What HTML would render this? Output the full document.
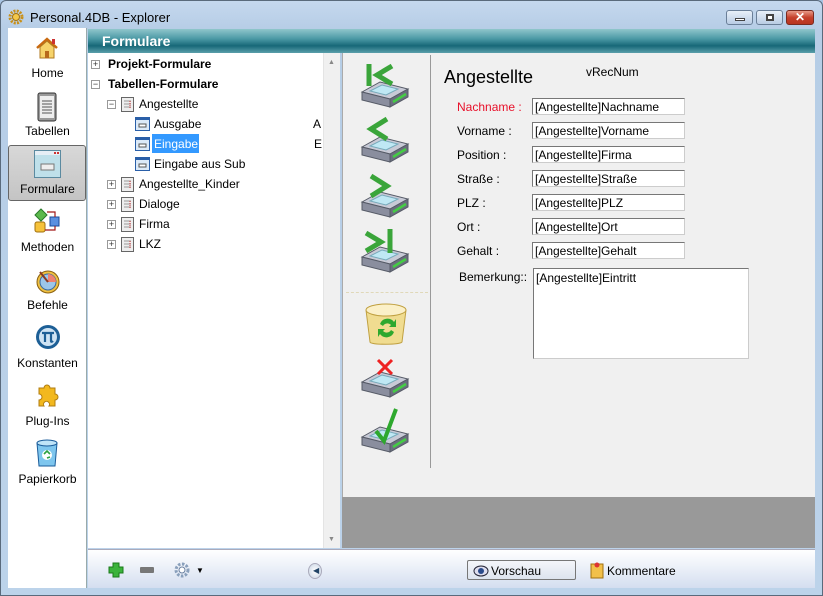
<!DOCTYPE html>
<html><head><meta charset="utf-8"><style>
*{margin:0;padding:0;box-sizing:border-box}
body{width:823px;height:596px;overflow:hidden;font-family:"Liberation Sans",sans-serif;font-size:12px;color:#000;background:#a9c5e4;position:relative}
.a{position:absolute}
.win{left:0;top:0;width:823px;height:596px;border:1px solid #5a6a7c;border-radius:6px 6px 0 0;background:linear-gradient(#c5d8ee,#b6cde6 28px,#bcd3ea)}
.side{left:8px;top:28px;width:79px;height:560px;background:#fff;border-right:1px solid #9aa}
.si{position:absolute;left:0;width:79px;text-align:center;font-size:12px;color:#000}
.hdr{left:88px;top:29px;width:727px;height:24px;background:linear-gradient(#8fc6cb,#4c9aa6 40%,#176878 70%,#5a9fab);color:#fff;font-weight:bold;font-size:14px;padding:4px 0 0 14px}
.tree{left:88px;top:53px;width:252px;height:495px;background:#fff}
.tr{position:absolute;font-size:12px;white-space:nowrap}
.pm{position:absolute;width:9px;height:9px;border:1px solid #999;background:#fff;font-size:9px;line-height:7px;text-align:center;color:#333}
.right{left:342px;top:53px;width:473px;height:444px;background:#f0f0f0;border-left:1px solid #aaa}
.gray{left:342px;top:497px;width:473px;height:51px;background:#999}
.lbl{position:absolute;left:457px;font-size:12px}
.inp{position:absolute;left:532px;width:153px;height:17px;background:#fff;border:1px solid #777;border-right-color:#ccc;border-bottom-color:#ccc;padding:1px 0 0 2px;font-size:12px;white-space:nowrap;overflow:hidden}
.bot{left:88px;top:549px;width:727px;height:39px;background:linear-gradient(#fff,#eef2f9 40%,#d4def0);border-top:1px solid #aab}
</style></head><body>
<div class="a win"></div>
<svg class="a" style="left:8px;top:9px" width="16" height="16" viewBox="0 0 16 16"><circle cx="8" cy="8" r="6" fill="none" stroke="#c8901a" stroke-width="3" stroke-dasharray="2 1.2"/><circle cx="8" cy="8" r="3.5" fill="#f3c84a" stroke="#a07010"/></svg>
<div class="a" style="left:30px;top:10px;font-size:13px">Personal.4DB - Explorer</div>
<div class="a" style="left:726px;top:10px;width:27px;height:15px;border:1px solid #6a7f98;border-radius:3px;background:linear-gradient(#e8f0f9,#b9cce4)"><div class="a" style="left:8px;top:7px;width:10px;height:3px;background:#fff;border:1px solid #444"></div></div>
<div class="a" style="left:756px;top:10px;width:27px;height:15px;border:1px solid #6a7f98;border-radius:3px;background:linear-gradient(#e8f0f9,#b9cce4)"><div class="a" style="left:9px;top:3px;width:8px;height:7px;border:2px solid #444;background:#fff"></div></div>
<div class="a" style="left:786px;top:10px;width:28px;height:15px;border:1px solid #7a2a20;border-radius:3px;background:linear-gradient(#e89a88,#c5402c 50%,#b83420);color:#fff;font-weight:bold;font-size:12px;text-align:center;line-height:13px">✕</div>

<div class="a side">
 <svg class="a" style="left:27px;top:8px" width="24" height="24" viewBox="0 0 24 24"><path d="M2 12L12 3l10 9" fill="none" stroke="#c96a10" stroke-width="2.5"/><path d="M5 11v11h14V11L12 5z" fill="#f6d36a" stroke="#b07820"/><rect x="10" y="15" width="4" height="7" fill="#b86a1a"/><rect x="17" y="3" width="3" height="5" fill="#c33"/></svg>
 <div class="si" style="top:38px">Home</div>
 <svg class="a" style="left:29px;top:64px" width="20" height="30" viewBox="0 0 20 30"><rect x="1" y="1" width="18" height="28" rx="2" fill="#9a9a9a" stroke="#333"/><rect x="3" y="4" width="14" height="22" fill="#eee"/><path d="M5 9h10M5 12h10M5 15h10M5 18h10M5 21h10" stroke="#555"/></svg>
 <div class="si" style="top:96px">Tabellen</div>
 <div class="a" style="left:0;top:117px;width:78px;height:56px;border:1px solid #666;border-radius:3px;background:linear-gradient(#d8d8d8,#c4c4c4)"></div>
 <svg class="a" style="left:26px;top:122px" width="27" height="28" viewBox="0 0 27 28"><rect x=".5" y=".5" width="26" height="27" fill="#bfe0ea" stroke="#5b8aa0"/><rect x="1" y="1" width="25" height="4" fill="#e6eef5"/><rect x="20" y="2" width="2" height="2" fill="#c33"/><rect x="23" y="2" width="2" height="2" fill="#c33"/><rect x="7" y="14" width="13" height="6" fill="#eee" stroke="#777"/></svg>
 <div class="si" style="top:154px">Formulare</div>
 <svg class="a" style="left:25px;top:180px" width="28" height="28" viewBox="0 0 28 28"><path d="M8 1l6 6-6 6-6-6z" fill="#5cb84c" stroke="#2a7a2a"/><rect x="2" y="14" width="10" height="10" rx="2" fill="#f6c23a" stroke="#a07010"/><rect x="17" y="9" width="9" height="9" fill="#5a8fe0" stroke="#1a4a9a"/><path d="M14 4h8v5M12 22h10v-4" fill="none" stroke="#a01818" stroke-width="1.2"/></svg>
 <div class="si" style="top:212px">Methoden</div>
 <svg class="a" style="left:27px;top:240px" width="26" height="26" viewBox="0 0 26 26"><circle cx="13" cy="14" r="11" fill="#f0c040" stroke="#8a6010"/><circle cx="13" cy="14" r="8" fill="#9cc6ea" stroke="#3a6aa0"/><path d="M13 14L13 6A8 8 0 0 1 21 14z" fill="#f08070"/><path d="M5 4l8 10" stroke="#8a3a20" stroke-width="2"/></svg>
 <div class="si" style="top:270px">Befehle</div>
 <svg class="a" style="left:27px;top:296px" width="26" height="26" viewBox="0 0 26 26"><circle cx="13" cy="13" r="12" fill="#1d5f96"/><circle cx="13" cy="13" r="9" fill="#cfe3f3"/><path d="M7 9h12M10 9v9M16 9v8c0 1 1 1 2 0" fill="none" stroke="#1d5f96" stroke-width="2.2"/></svg>
 <div class="si" style="top:328px">Konstanten</div>
 <svg class="a" style="left:28px;top:354px" width="24" height="26" viewBox="0 0 24 26"><path d="M3 6h5a3 3 0 1 1 6 0h5v6a3 3 0 1 1 0 6v6h-6a3 3 0 1 0-5 0H3v-6a3 3 0 1 0 0-6z" fill="#f2b81e" stroke="#b07c10"/></svg>
 <div class="si" style="top:386px">Plug-Ins</div>
 <svg class="a" style="left:27px;top:411px" width="24" height="28" viewBox="0 0 24 28"><path d="M2 4h20l-2 23H4z" fill="#7ec6ee" stroke="#1a5c9a"/><ellipse cx="12" cy="4" rx="10" ry="3" fill="#bfe4f8" stroke="#1a5c9a"/><circle cx="12" cy="16" r="5" fill="#fff"/><path d="M9 15l3-3 3 3M12 19l3-1" stroke="#2aa040" stroke-width="1.6" fill="none"/></svg>
 <div class="si" style="top:444px">Papierkorb</div>
</div>

<div class="a hdr">Formulare</div>

<div class="a tree">
 <div class="pm" style="left:3px;top:7px">+</div><div class="tr" style="left:20px;top:4px;font-weight:bold">Projekt-Formulare</div>
 <div class="pm" style="left:3px;top:27px">−</div><div class="tr" style="left:20px;top:24px;font-weight:bold">Tabellen-Formulare</div>
 <div class="pm" style="left:19px;top:47px">−</div>
 <svg class="a" style="left:33px;top:44px" width="13" height="15"><rect x=".5" y=".5" width="12" height="14" fill="#eee" stroke="#666"/><path d="M3 4h7M3 7h7M3 10h7" stroke="#999"/><path d="M9 4v8" stroke="#d33" stroke-dasharray="1 1"/></svg>
 <div class="tr" style="left:51px;top:44px">Angestellte</div>
 <svg class="a" style="left:47px;top:64px" width="15" height="14"><rect x=".5" y=".5" width="14" height="13" fill="#dceaf8" stroke="#2a5fa8"/><rect x="1" y="1" width="13" height="2" fill="#2a5fa8"/><rect x="4" y="7" width="7" height="3" fill="#fff" stroke="#555"/></svg>
 <div class="tr" style="left:66px;top:64px">Ausgabe</div>
 <div class="tr" style="left:225px;top:64px">A</div>
 <svg class="a" style="left:47px;top:84px" width="15" height="14"><rect x=".5" y=".5" width="14" height="13" fill="#dceaf8" stroke="#2a5fa8"/><rect x="1" y="1" width="13" height="2" fill="#2a5fa8"/><rect x="4" y="7" width="7" height="3" fill="#fff" stroke="#555"/></svg>
 <div class="tr" style="left:64px;top:81px;width:47px;height:19px;background:#3399ff;color:#fff;padding:3px 0 0 2px">Eingabe</div>
 <div class="tr" style="left:226px;top:84px">E</div>
 <svg class="a" style="left:47px;top:104px" width="15" height="14"><rect x=".5" y=".5" width="14" height="13" fill="#dceaf8" stroke="#2a5fa8"/><rect x="1" y="1" width="13" height="2" fill="#2a5fa8"/><rect x="4" y="7" width="7" height="3" fill="#fff" stroke="#555"/></svg>
 <div class="tr" style="left:66px;top:104px">Eingabe aus Sub</div>
 <div class="pm" style="left:19px;top:127px">+</div>
 <svg class="a" style="left:33px;top:124px" width="13" height="15"><rect x=".5" y=".5" width="12" height="14" fill="#eee" stroke="#666"/><path d="M3 4h7M3 7h7M3 10h7" stroke="#999"/><path d="M9 4v8" stroke="#d33" stroke-dasharray="1 1"/></svg>
 <div class="tr" style="left:51px;top:124px">Angestellte_Kinder</div>
 <div class="pm" style="left:19px;top:147px">+</div>
 <svg class="a" style="left:33px;top:144px" width="13" height="15"><rect x=".5" y=".5" width="12" height="14" fill="#eee" stroke="#666"/><path d="M3 4h7M3 7h7M3 10h7" stroke="#999"/><path d="M9 4v8" stroke="#d33" stroke-dasharray="1 1"/></svg>
 <div class="tr" style="left:51px;top:144px">Dialoge</div>
 <div class="pm" style="left:19px;top:167px">+</div>
 <svg class="a" style="left:33px;top:164px" width="13" height="15"><rect x=".5" y=".5" width="12" height="14" fill="#eee" stroke="#666"/><path d="M3 4h7M3 7h7M3 10h7" stroke="#999"/><path d="M9 4v8" stroke="#d33" stroke-dasharray="1 1"/></svg>
 <div class="tr" style="left:51px;top:164px">Firma</div>
 <div class="pm" style="left:19px;top:187px">+</div>
 <svg class="a" style="left:33px;top:184px" width="13" height="15"><rect x=".5" y=".5" width="12" height="14" fill="#eee" stroke="#666"/><path d="M3 4h7M3 7h7M3 10h7" stroke="#999"/><path d="M9 4v8" stroke="#d33" stroke-dasharray="1 1"/></svg>
 <div class="tr" style="left:51px;top:184px">LKZ</div>
 <div class="a" style="left:235px;top:0;width:17px;height:495px;background:#f0f0f0;border-left:1px solid #e4e4e4"></div>
 <div class="a" style="left:240px;top:6px;font-size:7px;color:#888">▲</div>
 <div class="a" style="left:240px;top:483px;font-size:7px;color:#888">▼</div>
</div>

<div class="a right"></div>
<div class="a gray"></div>
<div class="a" style="left:430px;top:55px;width:1px;height:413px;background:#999"></div>
<div class="a" style="left:346px;top:292px;width:82px;height:0;border-top:1px dashed #e0d8b8"></div>

<svg class="a" style="left:360px;top:62px" width="52" height="230" viewBox="0 0 52 230">
 <defs><g id="dr">
  <path d="M2 30L20 20L48 27L30 37z" fill="#c8cad6" stroke="#555a66"/>
  <path d="M10 29L22 23L38 27L26 33z" fill="#bfe8f4" stroke="#7ab"/>
  <path d="M2 30L30 37V45L2 38z" fill="#8a8e9e" stroke="#555a66"/>
  <path d="M30 37L48 27V35L30 45z" fill="#6a6e7e" stroke="#555a66"/>
  <path d="M33 40L46 32" stroke="#4c4" stroke-width="2.5"/>
 </g></defs>
 <use href="#dr"/><path d="M9 2v22" stroke="#3aa53a" stroke-width="5"/><path d="M32 4L17 13l15 9" fill="none" stroke="#3aa53a" stroke-width="5"/>
 <g transform="translate(0,55)"><use href="#dr"/><path d="M27 2L11 12l16 10" fill="none" stroke="#3aa53a" stroke-width="5"/></g>
 <g transform="translate(0,110)"><use href="#dr"/><path d="M11 4l16 10-16 10" fill="none" stroke="#3aa53a" stroke-width="5"/></g>
 <g transform="translate(0,165)"><use href="#dr"/><path d="M6 6l15 9-15 9" fill="none" stroke="#3aa53a" stroke-width="5"/><path d="M30 2v24" stroke="#3aa53a" stroke-width="5"/></g>
</svg>
<svg class="a" style="left:362px;top:302px" width="48" height="44" viewBox="0 0 48 44"><path d="M4 8l4 32c0 3 30 3 32 0l4-32z" fill="#f0dc90" stroke="#c0a040"/><ellipse cx="24" cy="8" rx="20" ry="6" fill="#fbf0c8" stroke="#c0a040"/><path d="M18 22a8 8 0 0 1 14-2l2-3v8h-7l2-2a5 5 0 0 0-8 1zM32 30a8 8 0 0 1-14 2l-2 3v-8h7l-2 2a5 5 0 0 0 8-1z" fill="#2ea82e"/></svg>
<svg class="a" style="left:360px;top:352px" width="52" height="50" viewBox="0 0 52 50"><use href="#dr"/><path d="M18 8l14 14M32 8L18 22" stroke="#e22" stroke-width="3"/></svg>
<svg class="a" style="left:360px;top:407px" width="52" height="50" viewBox="0 0 52 50"><use href="#dr"/><path d="M16 24l8 10 12-32" fill="none" stroke="#2ea82e" stroke-width="4"/></svg>

<div class="a" style="left:444px;top:67px;font-size:18px">Angestellte</div>
<div class="a" style="left:586px;top:65px;font-size:12px">vRecNum</div>
<div class="lbl" style="top:100px;color:#e8102a">Nachname :</div><div class="inp" style="top:98px">[Angestellte]Nachname</div>
<div class="lbl" style="top:124px">Vorname :</div><div class="inp" style="top:122px">[Angestellte]Vorname</div>
<div class="lbl" style="top:148px">Position :</div><div class="inp" style="top:146px">[Angestellte]Firma</div>
<div class="lbl" style="top:172px">Straße :</div><div class="inp" style="top:170px">[Angestellte]Straße</div>
<div class="lbl" style="top:196px">PLZ :</div><div class="inp" style="top:194px">[Angestellte]PLZ</div>
<div class="lbl" style="top:220px">Ort :</div><div class="inp" style="top:218px">[Angestellte]Ort</div>
<div class="lbl" style="top:244px">Gehalt :</div><div class="inp" style="top:242px">[Angestellte]Gehalt</div>
<div class="lbl" style="top:270px;left:459px">Bemerkung::</div>
<div class="inp" style="top:268px;left:533px;width:216px;height:91px;padding-top:2px">[Angestellte]Eintritt</div>

<div class="a bot"></div>
<svg class="a" style="left:108px;top:562px" width="16" height="16"><path d="M5 1h6v4h4v6h-4v4H5v-4H1V5h4z" fill="#3bb33b" stroke="#1a7a1a"/></svg>
<div class="a" style="left:140px;top:567px;width:14px;height:6px;background:#777;border-radius:1px"></div>
<svg class="a" style="left:173px;top:561px" width="18" height="18"><circle cx="9" cy="9" r="6" fill="none" stroke="#8aa0bc" stroke-width="3" stroke-dasharray="2.5 1.5"/><circle cx="9" cy="9" r="3" fill="#fff" stroke="#6a80a0"/></svg>
<div class="a" style="left:196px;top:566px;font-size:8px">▼</div>
<div class="a" style="left:308px;top:563px;width:14px;height:16px;border-radius:50%;background:radial-gradient(#fff,#c8d4e4);border:1px solid #aab"></div>
<div class="a" style="left:313px;top:566px;font-size:8px;color:#246">◀</div>
<div class="a" style="left:467px;top:560px;width:109px;height:20px;border:1px solid #777;border-radius:2px;background:linear-gradient(#f4f6fa,#dde4ee)"></div>
<svg class="a" style="left:473px;top:563px" width="16" height="14"><ellipse cx="8" cy="8" rx="7" ry="5" fill="#dde" stroke="#223"/><circle cx="8" cy="8" r="3" fill="#2a4a8a"/></svg>
<div class="a" style="left:491px;top:564px">Vorschau</div>
<svg class="a" style="left:590px;top:561px" width="15" height="18"><rect x="1" y="3" width="12" height="14" fill="#f2c04a" stroke="#a07010"/><circle cx="7" cy="4" r="2.5" fill="#d33"/></svg>
<div class="a" style="left:607px;top:564px">Kommentare</div>
</body></html>
